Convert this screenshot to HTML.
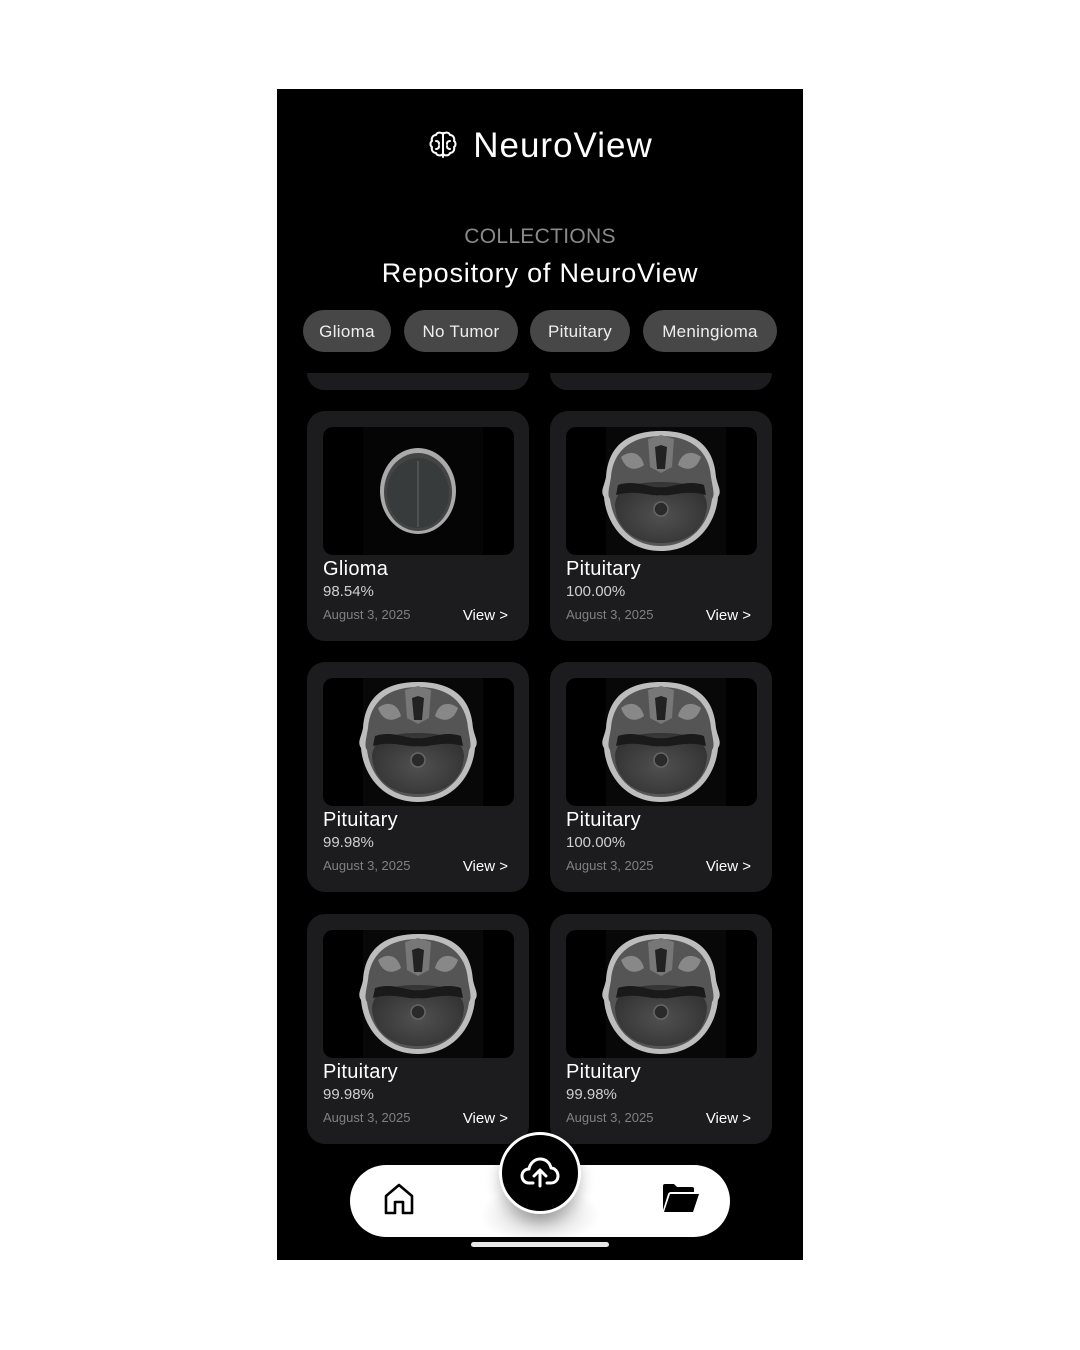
<!DOCTYPE html>
<html><head><meta charset="utf-8">
<style>
*{margin:0;padding:0;box-sizing:border-box}
body{width:1080px;height:1350px;background:#fff;position:relative;overflow:hidden;font-family:"Liberation Sans",sans-serif}
#phone{position:absolute;left:277px;top:89px;width:526px;height:1171px;background:#000;overflow:hidden}
.abs{position:absolute}
.title{left:0;width:526px;top:37px;text-align:center;color:#fff;font-size:35px;letter-spacing:1px}
.coll{left:0;width:526px;top:136px;text-align:center;color:#8a8a8a;font-size:21px;letter-spacing:0.3px}
.repo{left:0;width:526px;top:169px;text-align:center;color:#fff;font-size:27px;letter-spacing:0.8px}
.chip{top:221px;height:42px;border-radius:21px;background:#474747;color:#eee;font-size:17px;line-height:44px;text-align:center;letter-spacing:0.3px}
.card{width:222px;height:230px;background:#1c1c1e;border-radius:18px}
.img{position:absolute;left:16px;top:16px;width:191px;height:128px;background:#000;border-radius:10px;overflow:hidden}
.t{position:absolute;left:16px;top:147px;color:#fff;font-size:20px;letter-spacing:0.3px}
.p{position:absolute;left:16px;top:172px;color:#cfcfcf;font-size:15px}
.d{position:absolute;left:16px;top:196px;color:#808080;font-size:13px}
.v{position:absolute;right:21px;top:196px;color:#fff;font-size:15px}
.stub{top:284px;width:222px;height:17px;background:#1c1c1e;border-radius:0 0 18px 18px}
</style></head><body>
<svg width="0" height="0" style="position:absolute">
<defs>
<radialGradient id="gb" cx="50%" cy="55%" r="55%"><stop offset="0" stop-color="#505050"/><stop offset="1" stop-color="#343434"/></radialGradient>
<g id="pit">
<rect x="40" y="0" width="120" height="128" fill="#080808"/>
<path d="M95 4 C130 4 148 20 150 50 C152 60 156 64 152 70 C150 95 132 124 95 124 C58 124 40 95 38 70 C34 64 38 60 40 50 C42 20 60 4 95 4Z" fill="#bdbdbd"/>
<path d="M95 9 C125 9 143 24 145 50 C147 62 149 68 146 72 C143 96 126 119 95 119 C64 119 47 96 44 72 C41 68 43 62 45 50 C47 24 65 9 95 9Z" fill="#555"/>
<path d="M95 55 C125 55 140 62 141 78 C140 100 124 116 95 116 C66 116 50 100 49 78 C50 62 65 55 95 55Z" fill="url(#gb)"/>
<path d="M52 58 C70 52 85 62 95 60 C105 62 120 52 138 58 L140 68 C120 62 105 70 95 68 C85 70 70 62 50 68Z" fill="#1a1a1a"/>
<path d="M82 12 L95 8 L108 12 L106 40 L95 46 L84 40Z" fill="#777"/>
<path d="M89 20 L95 18 L101 20 L99 42 L91 42Z" fill="#222"/>
<circle cx="95" cy="82" r="7" fill="#2a2a2a" stroke="#666" stroke-width="1.5"/>
<path d="M55 30 C65 22 75 26 78 38 C70 44 60 44 55 30Z M135 30 C125 22 115 26 112 38 C120 44 130 44 135 30Z" fill="#888"/>
</g>
<g id="gli">
<rect x="40" y="0" width="120" height="128" fill="#050505"/>
<ellipse cx="95" cy="64" rx="38" ry="43" fill="#aaa"/>
<ellipse cx="95" cy="65" rx="34" ry="39" fill="#444"/>
<ellipse cx="95" cy="66" rx="31" ry="35" fill="#383b3b"/>
<line x1="95" y1="34" x2="95" y2="100" stroke="#666" stroke-width="1"/>
</g>
</defs>
</svg>
<div id="phone">
 <div class="abs title"><svg width="32" height="32" viewBox="0 0 32 32" style="vertical-align:-4px;margin-right:14px" fill="none" stroke="#fff" stroke-width="2" stroke-linecap="round" stroke-linejoin="round"><path d="M16 4v24M16 5c-2-2-6-2-7 1-3 0-5 3-4 6-2 1-2 5 0 6-1 3 1 6 4 6 1 3 5 3 7 1M16 5c2-2 6-2 7 1 3 0 5 3 4 6 2 1 2 5 0 6 1 3-1 6-4 6-1 3-5 3-7 1M9 12c2 0 3 1 3 3M23 12c-2 0-3 1-3 3M9 20c2 0 3-1 3-3M23 20c-2 0-3-1-3-3"/></svg>NeuroView</div>
 <div class="abs coll">COLLECTIONS</div>
 <div class="abs repo">Repository of NeuroView</div>
 <div class="abs chip" style="left:26px;width:88px">Glioma</div>
 <div class="abs chip" style="left:127px;width:114px">No Tumor</div>
 <div class="abs chip" style="left:253px;width:100px">Pituitary</div>
 <div class="abs chip" style="left:366px;width:134px">Meningioma</div>
 <div class="abs stub" style="left:30px"></div>
 <div class="abs stub" style="left:273px"></div>

 <div class="abs card" style="left:30px;top:322px"><div class="img"><svg width="191" height="128"><use href="#gli"/></svg></div><div class="t">Glioma</div><div class="p">98.54%</div><div class="d">August 3, 2025</div><div class="v">View &gt;</div></div>
 <div class="abs card" style="left:273px;top:322px"><div class="img"><svg width="191" height="128"><use href="#pit"/></svg></div><div class="t">Pituitary</div><div class="p">100.00%</div><div class="d">August 3, 2025</div><div class="v">View &gt;</div></div>
 <div class="abs card" style="left:30px;top:573px"><div class="img"><svg width="191" height="128"><use href="#pit"/></svg></div><div class="t">Pituitary</div><div class="p">99.98%</div><div class="d">August 3, 2025</div><div class="v">View &gt;</div></div>
 <div class="abs card" style="left:273px;top:573px"><div class="img"><svg width="191" height="128"><use href="#pit"/></svg></div><div class="t">Pituitary</div><div class="p">100.00%</div><div class="d">August 3, 2025</div><div class="v">View &gt;</div></div>
 <div class="abs card" style="left:30px;top:825px"><div class="img"><svg width="191" height="128"><use href="#pit"/></svg></div><div class="t">Pituitary</div><div class="p">99.98%</div><div class="d">August 3, 2025</div><div class="v">View &gt;</div></div>
 <div class="abs card" style="left:273px;top:825px"><div class="img"><svg width="191" height="128"><use href="#pit"/></svg></div><div class="t">Pituitary</div><div class="p">99.98%</div><div class="d">August 3, 2025</div><div class="v">View &gt;</div></div>

 <div class="abs" style="left:73px;top:1076px;width:380px;height:72px;border-radius:36px;background:#fff;overflow:hidden">
  <div class="abs" style="left:130px;top:20px;width:120px;height:60px;background:radial-gradient(ellipse at center,rgba(0,0,0,0.18),rgba(0,0,0,0) 70%)"></div>
 </div>
 <svg class="abs" style="left:106px;top:1093px" width="32" height="34" viewBox="0 0 32 34" fill="none" stroke="#000" stroke-width="2.6" stroke-linejoin="round"><path d="M3 31V14L16 3 29 14V31H20V20H12V31Z"/></svg>
 <svg class="abs" style="left:385px;top:1094px" width="38" height="30" viewBox="0 0 38 30"><path d="M1 3Q1 1 3 1H12L15 4H30Q32 4 32 6V9H9Q7 9 6 11L1 27Z" fill="#000"/><path d="M8 11H37L31 29H2Z" fill="#000"/></svg>
 <div class="abs" style="left:222px;top:1043px;width:82px;height:82px;border-radius:50%;background:#000;border:3px solid #fff;box-shadow:0 8px 14px rgba(0,0,0,0.25)">
  <svg class="abs" style="left:18px;top:22px" width="40" height="32" viewBox="0 0 40 32" fill="none" stroke="#fff" stroke-width="3" stroke-linecap="round" stroke-linejoin="round"><path d="M13 26H9C4 26 2 22 2 19 2 15 5 12 9 12 10 6 15 2 20 2 26 2 30 6 31 11 35 11 38 15 38 19 38 23 35 26 31 26H27"/><path d="M20 29V14M14 19L20 13 26 19"/></svg>
 </div>
 <div class="abs" style="left:194px;top:1153px;width:138px;height:5px;border-radius:3px;background:#e8e8e8"></div>
</div>
</body></html>
